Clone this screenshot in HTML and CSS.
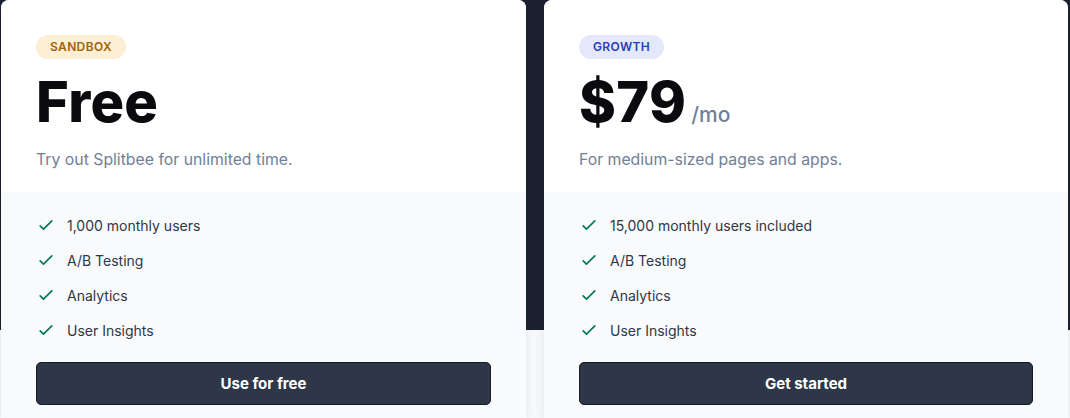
FILE: index.html
```html
<!DOCTYPE html>
<html lang="en">
<head>
<meta charset="utf-8">
<title>Pricing</title>
<link rel="stylesheet" href="styles.css">
</head>
<body>
<main class="pricing">
  <section class="card">
    <div class="card-top">
      <span class="badge badge-sandbox">Sandbox</span>
      <div class="price"><span class="amount">Free</span></div>
      <p class="desc">Try out Splitbee for unlimited time.</p>
    </div>
    <div class="card-bottom">
      <ul class="features">
        <li><svg class="check" viewBox="0 0 24 24" fill="none" stroke="currentColor" stroke-width="2" stroke-linecap="round" stroke-linejoin="round"><path d="M5 13l4 4L19 7"/></svg>1,000 monthly users</li>
        <li><svg class="check" viewBox="0 0 24 24" fill="none" stroke="currentColor" stroke-width="2" stroke-linecap="round" stroke-linejoin="round"><path d="M5 13l4 4L19 7"/></svg>A/B Testing</li>
        <li><svg class="check" viewBox="0 0 24 24" fill="none" stroke="currentColor" stroke-width="2" stroke-linecap="round" stroke-linejoin="round"><path d="M5 13l4 4L19 7"/></svg>Analytics</li>
        <li><svg class="check" viewBox="0 0 24 24" fill="none" stroke="currentColor" stroke-width="2" stroke-linecap="round" stroke-linejoin="round"><path d="M5 13l4 4L19 7"/></svg>User Insights</li>
      </ul>
      <a class="btn" href="#">Use for free</a>
    </div>
  </section>
  <section class="card">
    <div class="card-top">
      <span class="badge badge-growth">Growth</span>
      <div class="price"><span class="amount">$79</span><span class="per">/mo</span></div>
      <p class="desc">For medium-sized pages and apps.</p>
    </div>
    <div class="card-bottom">
      <ul class="features">
        <li><svg class="check" viewBox="0 0 24 24" fill="none" stroke="currentColor" stroke-width="2" stroke-linecap="round" stroke-linejoin="round"><path d="M5 13l4 4L19 7"/></svg>15,000 monthly users included</li>
        <li><svg class="check" viewBox="0 0 24 24" fill="none" stroke="currentColor" stroke-width="2" stroke-linecap="round" stroke-linejoin="round"><path d="M5 13l4 4L19 7"/></svg>A/B Testing</li>
        <li><svg class="check" viewBox="0 0 24 24" fill="none" stroke="currentColor" stroke-width="2" stroke-linecap="round" stroke-linejoin="round"><path d="M5 13l4 4L19 7"/></svg>Analytics</li>
        <li><svg class="check" viewBox="0 0 24 24" fill="none" stroke="currentColor" stroke-width="2" stroke-linecap="round" stroke-linejoin="round"><path d="M5 13l4 4L19 7"/></svg>User Insights</li>
      </ul>
      <a class="btn" href="#">Get started</a>
    </div>
  </section>
</main>
</body>
</html>
```
FILE: styles.css
```css
* { box-sizing: border-box; }
html, body { margin: 0; padding: 0; }
body {
  font-family: Inter, "Noto Sans", sans-serif;
  background: #f7f8fa;
  height: 418px;
  overflow: hidden;
}
.pricing {
  display: grid;
  grid-template-columns: 525px 524px;
  column-gap: 18px;
  padding: 0 2px 0 1px;
  background: linear-gradient(to bottom, #1b2130 0, #1b2130 330px, #f7f8fa 330px);
  height: 418px;
}
.card {
  border-radius: 8px 8px 0 0;
  overflow: hidden;
  background: #f9fafb;
  box-shadow: 0 4px 10px rgba(0,0,0,0.08);
  display: flex;
  flex-direction: column;
}
.card-top {
  background: #ffffff;
  padding: 35px 35px 21px;
  height: 192px;
}
.badge {
  display: inline-block;
  height: 24px;
  line-height: 24px;
  padding: 0 14px 0 14px;
  border-radius: 12px;
  font-size: 12px;
  font-weight: 600;
  letter-spacing: 0.03em;
  text-transform: uppercase;
}
.badge-sandbox { background: #fdefd3; color: #a16207; }
.badge-growth { background: #e3e9fb; color: #2b3db8; }
.price {
  margin-top: 15px;
  display: flex;
  align-items: baseline;
  height: 56px;
  line-height: 56px;
}
.amount {
  font-size: 56px;
  font-weight: 800;
  color: #0b0b0f;
  letter-spacing: 0.005em;
}
.per {
  margin-left: 5px;
  font-size: 21px;
  font-weight: 500;
  color: #718096;
}
.desc {
  margin: 18px 0 0;
  font-size: 15.8px;
  line-height: 24px;
  color: #718096;
}
.card-bottom {
  padding: 23px 35px 0;
}
.features {
  list-style: none;
  margin: 0;
  padding: 0;
  display: flex;
  flex-direction: column;
  gap: 15px;
}
.features li {
  display: flex;
  align-items: center;
  height: 20px;
  font-size: 14px;
  color: #2d3748;
}
.check {
  width: 20px;
  height: 20px;
  color: #047857;
  margin: 0 11px 0 0;
  flex: none;
}
.btn {
  display: flex;
  align-items: center;
  justify-content: center;
  margin-top: 22px;
  height: 43px;
  border-radius: 5px;
  background: #2d3748;
  border: 1px solid #151a24;
  color: #ffffff;
  font-weight: 700;
  font-size: 15px;
  text-decoration: none;
}
```
